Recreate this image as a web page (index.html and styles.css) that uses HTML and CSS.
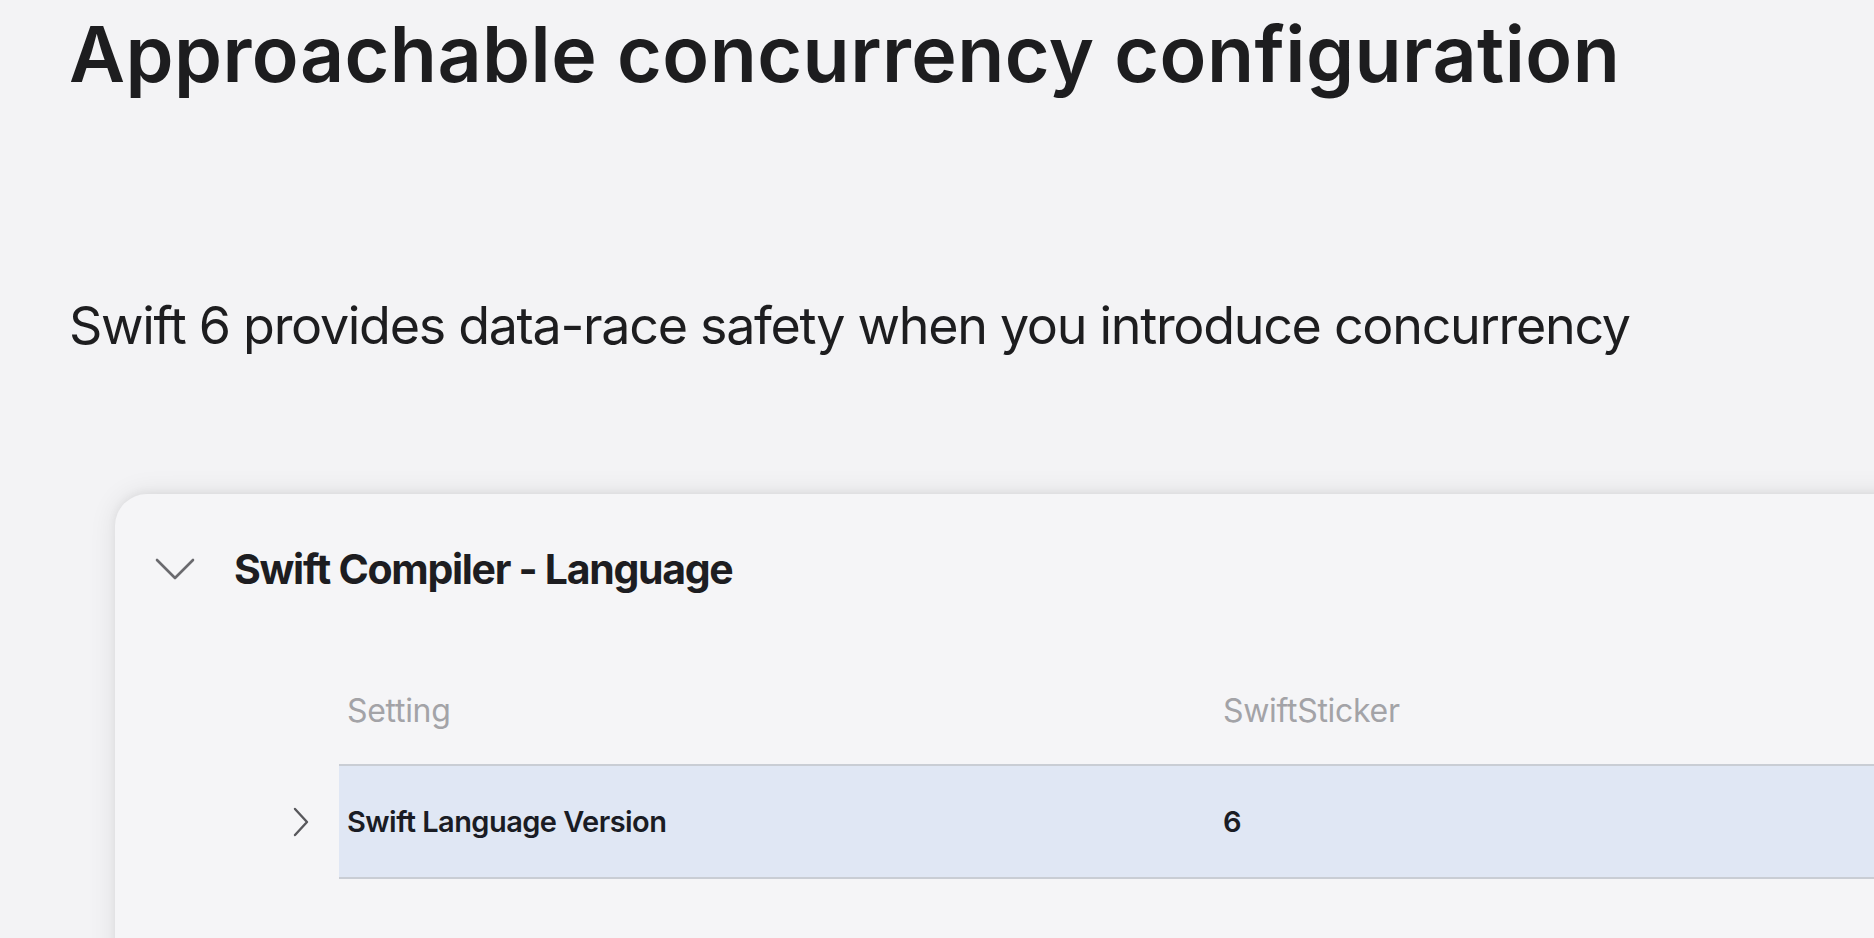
FILE: index.html
```html
<!DOCTYPE html>
<html lang="en">
<head>
<meta charset="utf-8">
<title>Approachable concurrency configuration</title>
<link rel="stylesheet" href="styles.css">
</head>
<body>
<div class="page">
  <h1 class="title">Approachable concurrency configuration</h1>
  <p class="subtitle">Swift 6 provides data-race safety when you introduce concurrency</p>
  <div class="card">
    <div class="section-head">
      <svg class="chev-down" width="40" height="24" viewBox="0 0 40 24" aria-hidden="true">
        <path d="M2 3 L20 21 L38 3" fill="none" stroke="#6a6a6e" stroke-width="2.6" stroke-linecap="round" stroke-linejoin="round"/>
      </svg>
      <h2 class="section-title">Swift Compiler - Language</h2>
    </div>
    <div class="table">
      <div class="thead">
        <span class="col1">Setting</span>
        <span class="col2">SwiftSticker</span>
      </div>
      <div class="row">
        <div class="row-toggle">
          <svg width="18" height="30" viewBox="0 0 18 30" aria-hidden="true">
            <path d="M3 2 L15 15 L3 28" fill="none" stroke="#58585c" stroke-width="2.4" stroke-linecap="round" stroke-linejoin="round"/>
          </svg>
        </div>
        <div class="row-body">
          <span class="col1 strong">Swift Language Version</span>
          <span class="col2 strong">6</span>
        </div>
      </div>
    </div>
  </div>
</div>
</body>
</html>
```

FILE: styles.css
```css
html, body {
  margin: 0;
  padding: 0;
  height: 100%;
  overflow: hidden;
  background: #f3f3f5;
}

body {
  font-family: Inter, "Liberation Sans", sans-serif;
  color: #1d1d21;
}

.page {
  padding-left: 69px;
  padding-top: 16px;
}

.title {
  margin: 0;
  font-size: 77px;
  line-height: 77px;
  font-weight: 600;
  letter-spacing: 0.45px;
  color: #1d1d1f;
  white-space: nowrap;
}

.subtitle {
  margin: 203px 0 0 0;
  font-size: 52px;
  line-height: 60px;
  font-weight: 400;
  letter-spacing: -1.3px;
  color: #1d1d1f;
  white-space: nowrap;
}

.card {
  margin-left: 46px;
  margin-top: 138px;
  width: 1900px;
  height: 700px;
  background: #f5f5f7;
  border-radius: 32px;
  box-shadow: 0 0 28px rgba(0, 0, 0, 0.09), 0 -2px 8px rgba(0, 0, 0, 0.05);
}

.section-head {
  display: flex;
  align-items: center;
  padding-top: 51px;
  padding-left: 40px;
  height: 48px;
}

.chev-down {
  flex: none;
  margin-right: 39px;
}

.section-title {
  margin: 0;
  font-size: 41px;
  line-height: 48px;
  font-weight: 700;
  letter-spacing: -1.3px;
  color: #1d1d21;
  white-space: nowrap;
}

.table {
  padding-left: 177px;
}

.thead {
  display: flex;
  margin-top: 97px;
  margin-bottom: 34px;
  padding-left: 55px;
  height: 40px;
  align-items: center;
  font-size: 32px;
  letter-spacing: -0.3px;
  color: #a3a3a7;
}

.col1 {
  flex: none;
  width: 876px;
  white-space: nowrap;
}

.col2 {
  white-space: nowrap;
}

.row {
  display: flex;
}

.row-toggle {
  flex: none;
  width: 47px;
  display: flex;
  align-items: center;
}

.row-body {
  flex: 1;
  display: flex;
  align-items: center;
  height: 111px;
  padding-left: 8px;
  background: #e0e7f4;
  border-top: 2px solid #c9cdd4;
  border-bottom: 2px solid #c9cdd4;
}

.strong {
  font-size: 29px;
  font-weight: 600;
  letter-spacing: -0.55px;
  color: #1a1c24;
}
```
